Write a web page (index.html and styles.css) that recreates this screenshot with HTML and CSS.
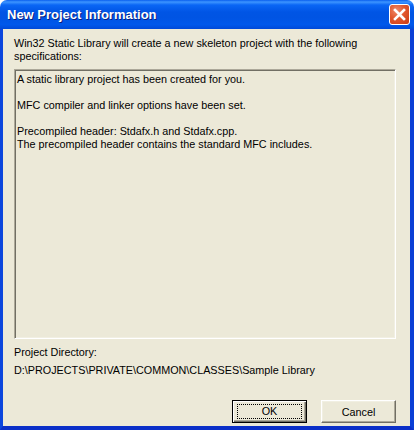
FILE: index.html
```html
<!DOCTYPE html>
<html lang="en">
<head>
  <meta charset="UTF-8">
  <title>New Project Information</title>
  <link rel="stylesheet" href="styles.css">
</head>
<body>

<div class="window">
  <div class="titlebar">
    <span class="title">New Project Information</span>
    <button class="close" aria-label="Close">
      <svg width="13" height="13" viewBox="0 0 13 13">
        <path d="M2 2 L11 11 M11 2 L2 11" stroke="#fff" stroke-width="2.6" stroke-linecap="square"/>
      </svg>
    </button>
  </div>

  <div class="client">
    <p class="intro">Win32 Static Library will create a new skeleton project with the following specifications:</p>

    <div class="info">
      <p>A static library project has been created for you.</p>
      <p>MFC compiler and linker options have been set.</p>
      <p>Precompiled header: Stdafx.h and Stdafx.cpp.<br>The precompiled header contains the standard MFC includes.</p>
    </div>

    <p class="label">Project Directory:</p>
    <p class="path">D:\PROJECTS\PRIVATE\COMMON\CLASSES\Sample Library</p>

    <div class="buttons">
      <button class="btn default"><span class="focus">OK</span></button>
      <button class="btn">Cancel</button>
    </div>
  </div>
</div>

</body>
</html>
```

FILE: styles.css
```css
body {
  margin: 0;
  background-color: #fff;
  font-family: "Liberation Sans", Arial, sans-serif;
  font-size: 10.8px;
  color: #000;
}
p {
  margin: 0;
}
.window {
  width: 414px;
  height: 430px;
  display: flex;
  flex-direction: column;
}
.titlebar {
  height: 29px;
  display: flex;
  align-items: center;
  justify-content: space-between;
  padding: 0 7px 0 7px;
  box-sizing: border-box;
  border-radius: 7px 7px 0 0;
  background: linear-gradient(to bottom, #0a5fee 0, #3d95ff 2px, #0a66f5 5px, #0055e5 12px, #0054e3 60%, #0058eb 85%, #0049d8 100%);
}
.title {
  font-size: 13px;
  font-weight: bold;
  color: #fff;
  text-shadow: 1px 1px 0 #0a1f80;
  padding-bottom: 1px;
}
.close {
  width: 21px;
  height: 21px;
  margin-right: -3px;
  margin-top: -1px;
  padding: 0;
  display: flex;
  align-items: center;
  justify-content: center;
  border: 1px solid #fff;
  border-radius: 3px;
  background: radial-gradient(circle at 35% 30%, #ef8a6a 0, #e1582f 45%, #c93b14 100%);
}
.client {
  flex: 1;
  display: flex;
  flex-direction: column;
  background-color: #ece9d8;
  border-left: 3px solid #0b46dd;
  border-right: 4px solid #0a3fd6;
  border-bottom: 4px solid #0a2fc8;
  padding: 8px 14px 3px 11px;
}
.intro {
  line-height: 13px;
}
.info {
  margin-top: 6px;
  height: 263px;
  padding: 3px 1px 2px;
  border: 1px solid;
  border-color: #aca899 #fff #fff #aca899;
  box-shadow: inset 1px 1px 0 #716f64, inset -1px -1px 0 #f1efe2;
  line-height: 13px;
}
.info p {
  padding-left: 1px;
  margin-bottom: 13px;
}
.label {
  margin-top: 7px;
  line-height: 13px;
}
.path {
  margin-top: 5px;
  line-height: 13px;
}
.buttons {
  margin-top: auto;
  display: flex;
  justify-content: flex-end;
  gap: 14px;
}
.btn {
  width: 75px;
  height: 23px;
  padding: 0;
  font-family: inherit;
  font-size: 10.8px;
  color: #000;
  background-color: #ece9d8;
  border: 1px solid;
  border-color: #fff #716f64 #716f64 #fff;
  box-shadow: inset -1px -1px 0 #aca899, inset 1px 1px 0 #f1efe2;
}
.btn.default {
  border: 1px solid #000;
  box-shadow: inset 1px 1px 0 #fff, inset -1px -1px 0 #716f64, inset -2px -2px 0 #aca899;
  display: flex;
  align-items: center;
  justify-content: center;
}
.focus {
  width: 63px;
  height: 13px;
  line-height: 13px;
  border: 1px dotted #000;
}
```
